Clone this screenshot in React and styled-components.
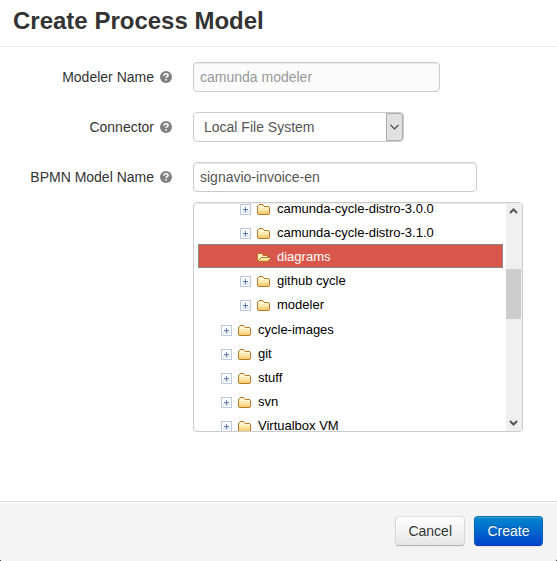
import React, { useState } from "react";
import styled, { createGlobalStyle, css } from "styled-components";

const GlobalStyle = createGlobalStyle`
  *, *::before, *::after { box-sizing: border-box; }
  body {
    margin: 0;
    background: #333;
    color: #333;
    font: 14px/20px "Liberation Sans", Arial, sans-serif;
  }
  button, input, select { font: inherit; margin: 0; }
`;

const Dialog = styled.form`
  display: flex;
  flex-direction: column;
  min-height: 100vh;
  border-radius: 0 0 3px 3px;
  background: #fff;
  overflow: hidden;
`;

const Header = styled.header`
  padding: 6px 13px 10px;
  border-bottom: 1px solid #eee;
`;

const Title = styled.h1`
  margin: 0;
  font-size: 24px;
  line-height: 30px;
  font-weight: bold;
`;

const Body = styled.div`
  flex: 1;
  display: flex;
  flex-direction: column;
  padding: 15px 12px 30px;
`;

const Field = styled.div`
  display: grid;
  grid-template-columns: 160px minmax(0, 1fr);
  column-gap: 21px;
  align-items: center;
  margin-bottom: ${(p) => (p.$tight ? "10px" : "20px")};
`;

const LabelCell = styled.div`
  display: flex;
  justify-content: flex-end;
  align-items: center;
  gap: 6px;
  white-space: nowrap;
`;

const HelpIcon = styled.svg`
  display: block;
  width: 12px;
  height: 12px;
`;

const controlBox = css`
  height: 30px;
  max-width: 100%;
  border: 1px solid #ccc;
  border-radius: 4px;
  background: #fff;
  color: #555;
`;

const TextInput = styled.input`
  ${controlBox}
  width: ${(p) => p.$width};
  padding: 4px 6px;
  box-shadow: inset 0 1px 1px rgba(0, 0, 0, 0.075);
  &:disabled {
    background: #fbfbfb;
    color: #999;
  }
`;

const SelectWrap = styled.div`
  ${controlBox}
  position: relative;
  width: 211px;
`;

const Select = styled.select`
  appearance: none;
  display: block;
  width: 100%;
  height: 28px;
  padding: 4px 24px 4px 10px;
  border: 0;
  border-radius: 4px;
  background: transparent;
  color: #555;
`;

const SelectArrow = styled.span`
  position: absolute;
  top: 0;
  right: 0;
  bottom: 0;
  width: 17px;
  display: grid;
  place-items: center;
  border: 1px solid #acacac;
  border-radius: 0 3px 3px 0;
  background: #e1e1e1;
  pointer-events: none;
`;

const TreePanel = styled.div`
  display: flex;
  width: 330px;
  max-width: calc(100% - 181px);
  height: 230px;
  margin-left: 181px;
  border: 1px solid #ccc;
  border-radius: 4px;
  overflow: hidden;
  box-shadow: inset 0 1px 1px rgba(0, 0, 0, 0.075);
`;

const TreeViewport = styled.div`
  flex: 1;
  min-width: 0;
  overflow: hidden;
  padding: 0 3px 0 4px;
`;

const TreeList = styled.ul`
  list-style: none;
  margin: -7px 0 0;
  padding: 0;
  color: #000;
  font-size: 13px;
`;

const TreeItem = styled.li`
  display: flex;
  align-items: center;
  height: 24px;
  margin-top: ${(p) => (p.$startsGroup ? "1px" : "0")};
  padding: 2px 0 0 ${(p) => 3 + p.$level * 19}px;
  border: 1px solid ${(p) => (p.$selected ? "#888" : "transparent")};
  background: ${(p) => (p.$selected ? "#d9574a" : "transparent")};
  color: ${(p) => (p.$selected ? "#fff" : "inherit")};
  white-space: nowrap;
  cursor: default;
`;

const Toggle = styled.button`
  flex: none;
  width: 11px;
  height: 11px;
  margin-right: 6px;
  padding: 0;
  border: 0;
  background: none;
  visibility: ${(p) => (p.$leaf ? "hidden" : "visible")};
  svg { display: block; }
`;

const FolderIcon = styled.svg`
  flex: none;
  display: block;
  width: 14px;
  height: 11px;
  margin-right: 6px;
`;

const ScrollColumn = styled.div`
  flex: none;
  display: flex;
  flex-direction: column;
  width: 16px;
  padding-right: 1px;
  background: #efefef;
`;

const ScrollButton = styled.button`
  display: grid;
  place-items: center;
  width: 15px;
  height: 17px;
  padding: 0;
  border: 0;
  background: none;
`;

const ScrollTrack = styled.div`
  flex: 1;
  padding-top: 49px;
`;

const ScrollThumb = styled.div`
  height: 50px;
  background: #cdcdcd;
`;

const Footer = styled.footer`
  display: flex;
  justify-content: flex-end;
  gap: 9px;
  padding: 14px 14px 15px;
  border-top: 1px solid #ddd;
  background: #f4f4f4;
  box-shadow: inset 0 1px 0 #fff;
`;

const Button = styled.button`
  height: 30px;
  min-width: 69px;
  padding: 4px 12px;
  border: 1px solid;
  border-radius: 4px;
  line-height: 20px;
  box-shadow: inset 0 1px 0 rgba(255, 255, 255, 0.2), 0 1px 2px rgba(0, 0, 0, 0.05);
  ${(p) =>
    p.$primary
      ? css`
          color: #fff;
          border-color: #0077b3 #0062b8 #003ab3;
          background: linear-gradient(#0088cc, #0044cc);
          text-shadow: 0 -1px 0 rgba(0, 0, 0, 0.25);
        `
      : css`
          color: #333;
          border-color: #dedede #d6d6d6 #b3b3b3;
          background: linear-gradient(#fff, #e6e6e6);
          text-shadow: 0 1px 1px rgba(255, 255, 255, 0.75);
        `}
`;

const Help = () => (
  <HelpIcon viewBox="0 0 12 12" aria-hidden="true">
    <circle cx="6" cy="6" r="6" fill="#808080" />
    <path d="M4 4.7V4.4C4 3.3 4.9 2.8 6 2.8s2 .6 2 1.6c0 1.2-1.9 1.2-1.9 2.5" fill="none" stroke="#fff" strokeWidth="1.6" />
    <path d="M5.2 7.9h1.7v1.5H5.2z" fill="#fff" />
  </HelpIcon>
);

const Plus = () => (
  <svg width="11" height="11" viewBox="0 0 11 11" shapeRendering="crispEdges" aria-hidden="true">
    <rect width="11" height="11" fill="#bac9e2" />
    <path d="M1 1h9v9H1z" fill="#fff" />
    <path d="M2 6h7v3H2z" fill="#e6ebf3" />
    <path d="M5 3h1v5H5zM3 5h5v1H3z" fill="#5b7db1" />
  </svg>
);

const ClosedFolder = () => (
  <FolderIcon viewBox="0 0 14 11" shapeRendering="crispEdges" aria-hidden="true">
    <path d="M2 0h4v1h1v1h5v1h1v7h-1v1H1v-1H0V2h1V1h1z" fill="#b87a2a" />
    <path d="M2 1h4v1h1v1h5v1H1V2h1z" fill="#fff4d0" />
    <path d="M1 4h11v2H1z" fill="#feebb6" />
    <path d="M1 6h11v2H1z" fill="#fce09a" />
    <path d="M1 8h11v2H1z" fill="#f9cf78" />
  </FolderIcon>
);

const OpenFolder = () => (
  <FolderIcon viewBox="0 0 14 11" shapeRendering="crispEdges" aria-hidden="true">
    <path d="M1 1h4v1h1v1h5v2h3v1h-1v2h-1v1h-1v1H1V9H0V2h1z" fill="#b87a2a" />
    <path d="M1 2h4v1h1v1h4v1H4v1H3v1H2v1H1z" fill="#fff0c0" />
    <path d="M5 6h8v1H4V6z" fill="#fff0c0" />
    <path d="M3 7h9v1H3z" fill="#fce09a" />
    <path d="M2 8h9v1H2z" fill="#f9cf78" />
  </FolderIcon>
);

const Chevron = ({ up }) => (
  <svg width="9" height="9" viewBox="0 0 9 9" aria-hidden="true">
    <path d={up ? "M1 6l3.5-3.5L8 6" : "M1 3l3.5 3.5L8 3"} fill="none" stroke="#555" strokeWidth="2" />
  </svg>
);

const folders = [
  { name: "camunda-cycle-distro-3.0.0", level: 2 },
  { name: "camunda-cycle-distro-3.1.0", level: 2 },
  { name: "diagrams", level: 2, leaf: true },
  { name: "github cycle", level: 2 },
  { name: "modeler", level: 2 },
  { name: "cycle-images", level: 1 },
  { name: "git", level: 1 },
  { name: "stuff", level: 1 },
  { name: "svn", level: 1 },
  { name: "Virtualbox VM", level: 1 },
];

const FieldLabel = ({ htmlFor, children }) => (
  <LabelCell>
    <label htmlFor={htmlFor}>{children}</label>
    <Help />
  </LabelCell>
);

export default function App() {
  const [selected, setSelected] = useState("diagrams");
  const [modelName, setModelName] = useState("signavio-invoice-en");

  return (
    <>
      <GlobalStyle />
      <Dialog onSubmit={(e) => e.preventDefault()}>
        <Header>
          <Title>Create Process Model</Title>
        </Header>
        <Body>
          <Field>
            <FieldLabel htmlFor="modeler">Modeler Name</FieldLabel>
            <TextInput id="modeler" $width="247px" value="camunda modeler" disabled readOnly />
          </Field>
          <Field>
            <FieldLabel htmlFor="connector">Connector</FieldLabel>
            <SelectWrap>
              <Select id="connector">
                <option>Local File System</option>
              </Select>
              <SelectArrow>
                <svg width="9" height="6" viewBox="0 0 9 6" aria-hidden="true">
                  <path d="M.5 .8l4 4 4-4" fill="none" stroke="#444" strokeWidth="1.2" />
                </svg>
              </SelectArrow>
            </SelectWrap>
          </Field>
          <Field $tight>
            <FieldLabel htmlFor="model">BPMN Model Name</FieldLabel>
            <TextInput id="model" $width="284px" value={modelName} onChange={(e) => setModelName(e.target.value)} />
          </Field>
          <TreePanel>
            <TreeViewport>
              <TreeList role="tree" aria-label="Folders">
                {folders.map((f, i) => (
                  <TreeItem
                    key={f.name}
                    role="treeitem"
                    aria-selected={selected === f.name}
                    $level={f.level}
                    $selected={selected === f.name}
                    $startsGroup={i > 0 && folders[i - 1].level !== f.level}
                    onClick={() => setSelected(f.name)}
                  >
                    <Toggle type="button" $leaf={f.leaf} aria-label={`Expand ${f.name}`}>
                      <Plus />
                    </Toggle>
                    {f.leaf ? <OpenFolder /> : <ClosedFolder />}
                    <span>{f.name}</span>
                  </TreeItem>
                ))}
              </TreeList>
            </TreeViewport>
            <ScrollColumn>
              <ScrollButton type="button" aria-label="Scroll up">
                <Chevron up />
              </ScrollButton>
              <ScrollTrack>
                <ScrollThumb />
              </ScrollTrack>
              <ScrollButton type="button" aria-label="Scroll down">
                <Chevron />
              </ScrollButton>
            </ScrollColumn>
          </TreePanel>
        </Body>
        <Footer>
          <Button type="button">Cancel</Button>
          <Button type="submit" $primary>
            Create
          </Button>
        </Footer>
      </Dialog>
    </>
  );
}
